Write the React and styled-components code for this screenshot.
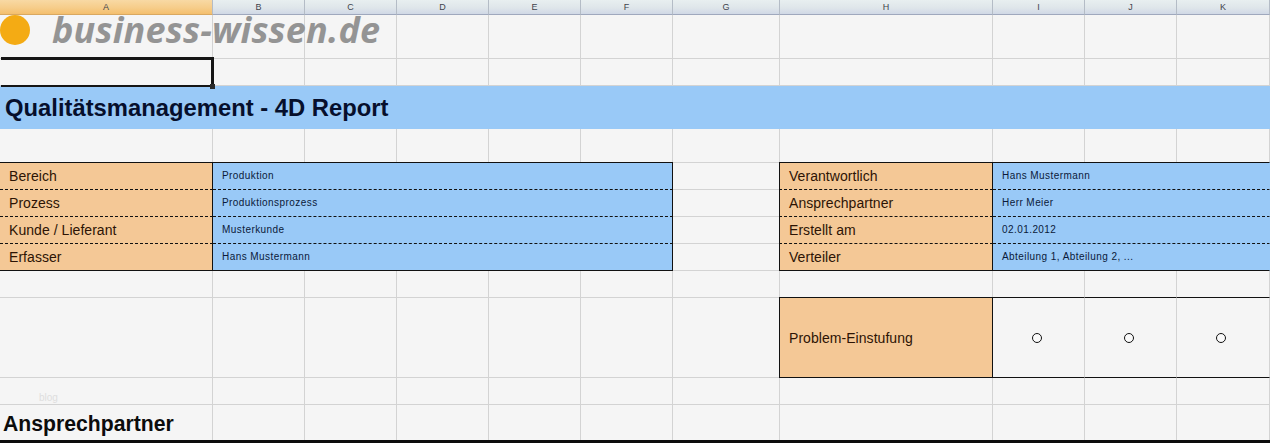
import React from 'react';
import styled, { createGlobalStyle, css } from 'styled-components';

const GlobalStyle = createGlobalStyle`
    html, body {
        margin: 0;
        padding: 0;
        background: #f5f5f5;
        overflow: hidden;
    }
`;

const GRID = '#d3d3d3';
const BLUE = '#99c9f7';
const ORANGE = '#f4c896';
const COLUMNS = 'ABCDEFGHIJK'.split('');

const Sheet = styled.div`
    position: relative;
    width: 1270px;
    height: 443px;
    display: grid;
    grid-template-columns: 213px repeat(5, 92px) 107px 213px 92px 92px 93px;
    grid-template-rows: 15px 44px 27px 43px 34px repeat(4, 27px) 27px 80px 27px 35px 1fr;
    background: #f5f5f5;
    font-family: 'Liberation Sans', Arial, sans-serif;
    overflow: hidden;
`;

const ColumnHead = styled.div`
    position: relative;
    z-index: 1;
    display: flex;
    align-items: center;
    justify-content: center;
    box-sizing: border-box;
    font-size: 9px;
    color: #3f444c;
    border-right: 1px solid #b4bcc6;
    border-bottom: 1px solid ${({ $active }) => ($active ? '#d9a860' : '#9fa8bd')};
    background: ${({ $active }) =>
        $active
            ? 'linear-gradient(#f8d9a4, #f6cd8a 55%, #f4bf6e)'
            : 'linear-gradient(#e8eff0, #dfe6ea 55%, #d0d8e6)'};
`;

const Cell = styled.div`
    box-sizing: border-box;
    border-right: 1px solid ${GRID};
    border-bottom: 1px solid ${GRID};
    min-width: 0;
`;

const SelectedCell = styled(Cell)`
    position: relative;
    &::before {
        content: '';
        position: absolute;
        z-index: 1;
        inset: -2px -2px -2px 1px;
        border: solid #151515;
        border-width: 3px 3px 2px 0;
    }
    &::after {
        content: '';
        position: absolute;
        z-index: 1;
        right: -3px;
        bottom: -4px;
        width: 5px;
        height: 5px;
        background: #2a2a2a;
    }
`;

const TitleBand = styled.div`
    grid-column: 1 / -1;
    display: flex;
    align-items: center;
    padding: 1px 0 0 5px;
    background: ${BLUE};
    color: #060f2c;
    font-size: 23.8px;
    font-weight: 700;
`;

const Label = styled.div`
    box-sizing: border-box;
    display: flex;
    align-items: center;
    padding-left: 9px;
    background: ${ORANGE};
    color: #2d1405;
    font-size: 14px;
    letter-spacing: 0.05px;
    border-right: 1px solid #111;
    border-bottom: 1px ${({ $last }) => ($last ? 'solid' : 'dashed')} #111;
    ${({ $first }) =>
        $first &&
        css`
            margin-top: -1px;
            border-top: 1px solid #111;
        `}
    ${({ $boxed }) =>
        $boxed &&
        css`
            margin-left: -1px;
            border-left: 1px solid #111;
        `}
`;

const Value = styled.div`
    box-sizing: border-box;
    grid-column: span ${({ $span }) => $span};
    display: flex;
    align-items: center;
    padding-left: 9px;
    padding-bottom: 2px;
    background: ${BLUE};
    color: #0b1a3a;
    font-size: 10px;
    letter-spacing: 0.43px;
    white-space: nowrap;
    border-right: 1px solid ${({ $open }) => ($open ? BLUE : '#111')};
    border-bottom: 1px ${({ $last }) => ($last ? 'solid' : 'dashed')} #111;
    ${({ $first }) =>
        $first &&
        css`
            margin-top: -1px;
            border-top: 1px solid #111;
        `}
`;

const RatingCell = styled(Cell)`
    display: flex;
    align-items: center;
    justify-content: center;
    margin-top: -1px;
    padding-right: 4px;
    border-top: 1px solid #111;
    border-bottom: 1px solid #111;
`;

const Radio = styled.span`
    display: block;
    box-sizing: border-box;
    width: 10px;
    height: 10px;
    border: 1px solid #111;
    border-radius: 50%;
    background: #fafafa;
`;

const FaintCell = styled(Cell)`
    display: flex;
    align-items: center;
    padding-left: 39px;
    padding-top: 13px;
    color: #dedede;
    font-size: 10px;
`;

const SectionCell = styled(Cell)`
    display: flex;
    align-items: center;
    padding: 2px 0 0 3px;
    color: #0c0c0c;
    font-size: 21.2px;
    font-weight: 700;
    white-space: nowrap;
    border-bottom: 0;
`;

const SectionBlank = styled(Cell)`
    border-bottom: 0;
`;

const BottomRule = styled.div`
    grid-column: 1 / -1;
    background: #0c0c0c;
    height: 3px;
`;

const Logo = styled.div`
    position: absolute;
    top: 15px;
    left: 0;
    height: 30px;
    display: flex;
    align-items: center;
    gap: 22px;
`;

const LogoMark = styled.span`
    display: block;
    width: 30px;
    height: 30px;
    border-radius: 50%;
    background: #f4ab14;
`;

const LogoText = styled.span`
    font-family: 'Open Sans', 'Noto Sans', sans-serif;
    font-style: italic;
    font-weight: 700;
    font-size: 36px;
    line-height: 30px;
    letter-spacing: 0.18px;
    color: #949494;
    white-space: nowrap;
`;

const blanks = (count, prefix) =>
    Array.from({ length: count }, (_, i) => <Cell key={`${prefix}-${i}`} />);

const DETAILS = [
    ['Bereich', 'Produktion', 'Verantwortlich', 'Hans Mustermann'],
    ['Prozess', 'Produktionsprozess', 'Ansprechpartner', 'Herr Meier'],
    ['Kunde / Lieferant', 'Musterkunde', 'Erstellt am', '02.01.2012'],
    ['Erfasser', 'Hans Mustermann', 'Verteiler', 'Abteilung 1, Abteilung 2, ...'],
];

const App = () => {
    return (
        <>
            <GlobalStyle />
            <Sheet>
                {COLUMNS.map((name, i) => (
                    <ColumnHead key={name} $active={i === 0}>
                        {name}
                    </ColumnHead>
                ))}

                {blanks(11, 'logo')}

                <SelectedCell />
                {blanks(10, 'selected')}

                <TitleBand>Qualitätsmanagement - 4D Report</TitleBand>

                {blanks(11, 'gap')}

                {DETAILS.map((row, i) => {
                    const first = i === 0;
                    const last = i === DETAILS.length - 1;
                    return (
                        <React.Fragment key={row[0]}>
                            <Label $first={first} $last={last}>
                                {row[0]}
                            </Label>
                            <Value $span={5} $first={first} $last={last}>
                                {row[1]}
                            </Value>
                            <Cell />
                            <Label $first={first} $last={last} $boxed>
                                {row[2]}
                            </Label>
                            <Value $span={3} $first={first} $last={last} $open>
                                {row[3]}
                            </Value>
                        </React.Fragment>
                    );
                })}

                {blanks(11, 'spacer')}

                {blanks(7, 'rating')}
                <Label $first $last $boxed>
                    Problem-Einstufung
                </Label>
                <RatingCell>
                    <Radio />
                </RatingCell>
                <RatingCell>
                    <Radio />
                </RatingCell>
                <RatingCell>
                    <Radio />
                </RatingCell>

                <FaintCell>blog</FaintCell>
                {blanks(10, 'faint')}

                <SectionCell>Ansprechpartner</SectionCell>
                {Array.from({ length: 10 }, (_, i) => (
                    <SectionBlank key={`section-${i}`} />
                ))}

                <BottomRule />

                <Logo>
                    <LogoMark />
                    <LogoText>business-wissen.de</LogoText>
                </Logo>
            </Sheet>
        </>
    );
};

export default App;
